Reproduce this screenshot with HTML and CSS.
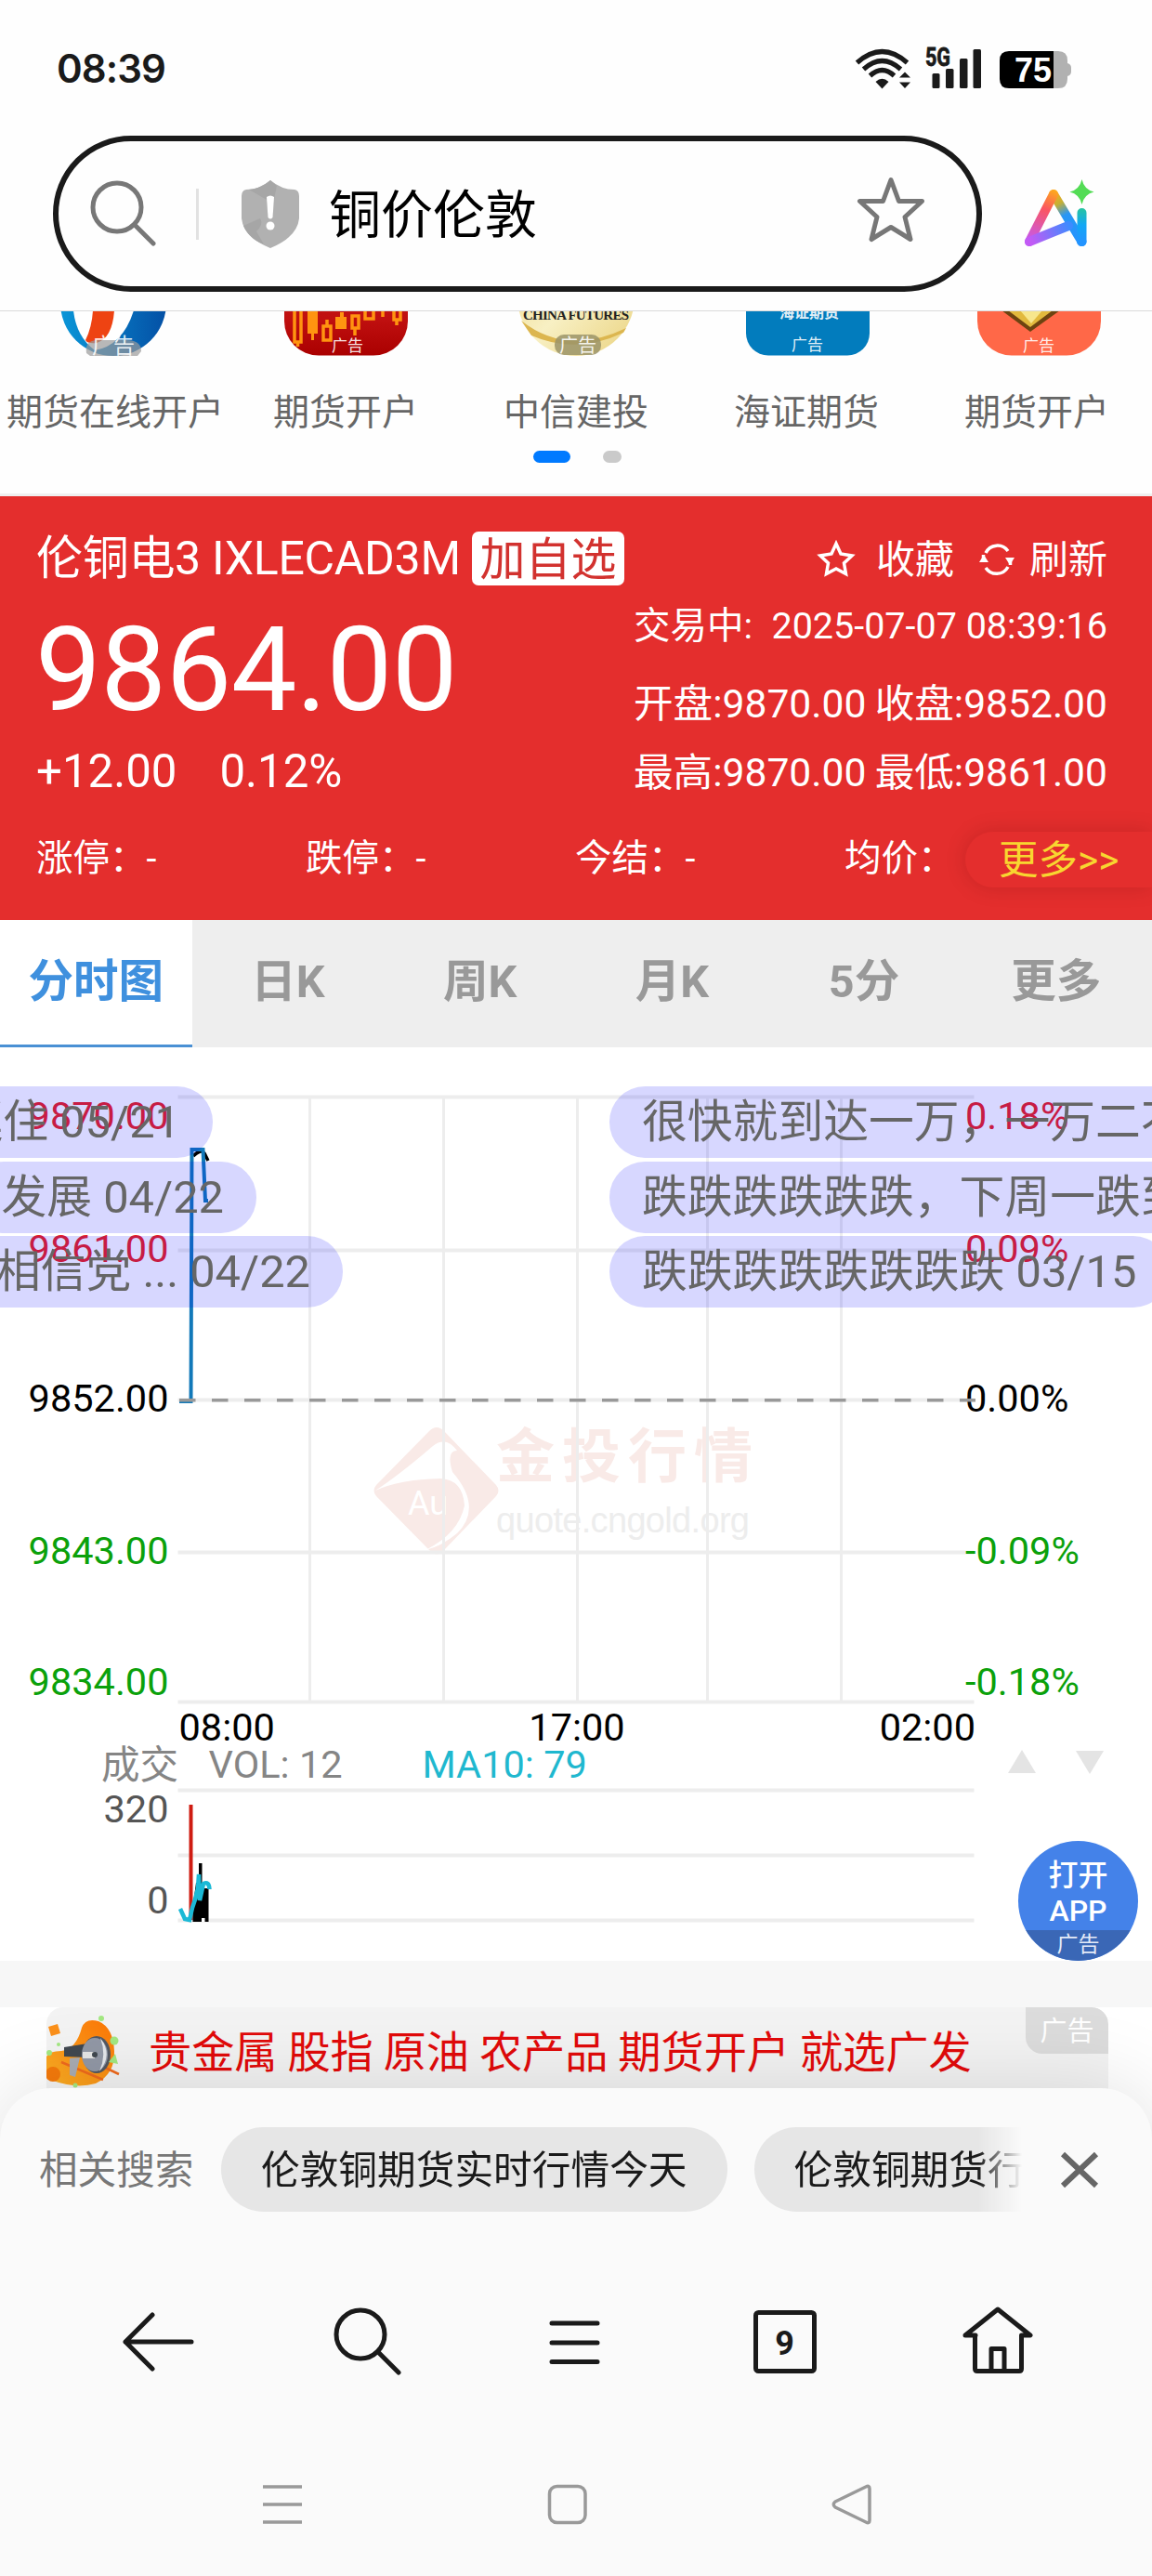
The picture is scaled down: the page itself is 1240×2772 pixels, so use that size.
FILE: index.html
```html
<!DOCTYPE html>
<html lang="zh-CN">
<head>
<meta charset="utf-8">
<title>铜价伦敦</title>
<link rel="stylesheet" href="styles.css">
</head>
<body>
<div class="phone">
  <header class="status-bar">
    <span class="clock">08:39</span>
    <svg class="status-icons" viewBox="916 46 242 56" aria-hidden="true">
      <g fill="none" stroke="#1a1a1a" stroke-width="5.2">
        <path d="M922.5 67.500Q949.500 43.500 976.500 67.500"/>
        <path d="M929.500 74.500Q949.500 56.500 969.500 74.500"/>
        <path d="M936.500 81.500Q949.500 69.500 962.500 81.500"/>
      </g>
      <path d="M942.500 88Q949.500 81.500 956.500 88L949.500 95.500Z" fill="#1a1a1a"/>
      <path d="M974 77.500L980 83.500H968ZM974 95L980 88.500H968Z" fill="#1a1a1a"/>
      <text x="996" y="70.500" class="net-label" textLength="27" lengthAdjust="spacingAndGlyphs">5G</text>
      <g fill="#1a1a1a">
        <rect x="1003.500" y="79" width="8" height="16" rx="1.500"/>
        <rect x="1018" y="74" width="8.500" height="21" rx="1.500"/>
        <rect x="1033" y="63" width="8.500" height="32" rx="1.500"/>
        <rect x="1047.500" y="53" width="8.500" height="42" rx="1.500"/>
      </g>
      <path d="M1134 55H1139Q1149 55 1149 65V68Q1153 69 1153 73V77Q1153 81 1149 82V85Q1149 95 1139 95H1134Z" fill="#b1b1b1"/>
      <path d="M1134 55H1086Q1076 55 1076 65V85Q1076 95 1086 95H1134Z" fill="#000"/>
      <text x="1092" y="88" class="battery-label" textLength="40" lengthAdjust="spacingAndGlyphs">75</text>
    </svg>
  </header>

  <div class="address-row">
    <div class="address">
      <svg class="i-search" viewBox="94 190 78 80"><circle cx="126" cy="223" r="26"/><path d="M145 242L165 262"/></svg>
      <span class="divider"></span>
      <svg class="i-shield" viewBox="258 190 66 78">
        <path d="M291 193Q303 203 317 203Q322 204 322 210V234Q320 254 291 266Q262 254 260 234V210Q260 204 265 203Q279 203 291 193Z" fill="#b1b1b1"/>
        <path d="M291 193Q281 202 268 203L294 218L298 199Z" fill="#a6a6a6"/>
        <path d="M262 242Q268 256 284 262L276 248Q284 240 280 234Z" fill="#a6a6a6"/>
        <path d="M287 211Q291 208 295 211L293.500 233Q291 236 288.500 233Z" fill="#fff"/><circle cx="291" cy="242" r="4.500" fill="#fff"/>
      </svg>
      <span class="query">铜价伦敦</span>
      <svg class="i-star" viewBox="921 188 76 76"><path d="M959 193.500L967.500 216.500H992.500L974 233.500L980 257.500L959 244.500L938 257.500L944 233.500L925.500 216.500H950.500Z"/></svg>
    </div>
    <svg class="i-ai" viewBox="1099 190 82 80">
      <defs>
        <linearGradient id="aiA" gradientUnits="userSpaceOnUse" x1="1134" y1="205" x2="1110" y2="262"><stop offset="0" stop-color="#fda81e"/><stop offset=".35" stop-color="#fb5560"/><stop offset="1" stop-color="#c25af5"/></linearGradient>
        <linearGradient id="aiB" gradientUnits="userSpaceOnUse" x1="1110" y1="260" x2="1150" y2="240"><stop offset="0" stop-color="#c25af5"/><stop offset="1" stop-color="#3d8bff"/></linearGradient>
        <linearGradient id="aiC" gradientUnits="userSpaceOnUse" x1="1134" y1="207" x2="1164" y2="260"><stop offset="0" stop-color="#fda81e"/><stop offset=".22" stop-color="#c5b034"/><stop offset=".45" stop-color="#2996f5"/><stop offset="1" stop-color="#2394ff"/></linearGradient>
        <linearGradient id="aiD" gradientUnits="userSpaceOnUse" x1="0" y1="224" x2="0" y2="260"><stop offset="0" stop-color="#27c4a0"/><stop offset=".5" stop-color="#12a7f5"/><stop offset="1" stop-color="#2394ff"/></linearGradient>
      </defs>
      <g fill="none" stroke-width="10" stroke-linecap="round" stroke-linejoin="round">
        <path d="M1134 209L1164.500 260" stroke="url(#aiC)"/>
        <path d="M1134 209L1108 260" stroke="url(#aiA)"/>
        <path d="M1108 260L1150 243" stroke="url(#aiB)"/>
        <path d="M1164.500 229V260.100L1164 260" stroke="url(#aiD)"/>
      </g>
      <path d="M1164.500 193Q1167 204 1177.500 206.500Q1167 209 1164.500 220Q1162 209 1151.500 206.500Q1162 204 1164.500 193Z" fill="#53dc55"/>
    </svg>
  </div>

  <section class="shortcuts">
    <div class="shortcut">
      <svg viewBox="0 335 248 50">
        <defs><linearGradient id="bl" x2="1"><stop offset="0" stop-color="#0a96d8"/><stop offset="1" stop-color="#0450a5"/></linearGradient></defs>
        <circle cx="122" cy="326" r="57" fill="url(#bl)"/>
        <path d="M79 334Q82 362 102 377Q132 372 144 334Z" fill="#fff"/>
        <path d="M100 334H123Q121 364 104 369Q94 370 92 366Q99 352 100 334Z" fill="#ee4312"/>
        <path d="M93 380Q91 366 105 366H136Q152 366 152 378L148 383H97Z" fill="#9a9a9a" fill-opacity=".7"/>
        <text x="122" y="380" class="ad-tag big">广告</text>
      </svg><span>期货在线开户</span>
    </div>
    <div class="shortcut">
      <svg viewBox="248 335 248 50">
        <defs><linearGradient id="rd" x2="0" y2="1"><stop offset="0" stop-color="#cf2220"/><stop offset=".7" stop-color="#c01010"/><stop offset="1" stop-color="#aa0000"/></linearGradient></defs>
        <rect x="306" y="250" width="133" height="132.500" rx="37" fill="url(#rd)"/>
        <g fill="none" stroke="#ff9410" stroke-width="3.500"><path d="M317 330V368H324V330M320.500 368V373M348 351H356V366H348ZM352 344V351M379 340H386V353H379ZM382 353V361M393 330V343H402V330M412 330V341M424 330V344H431V330M427 344V350"/></g>
        <path d="M331 330H342V359H338V366H335V359H331ZM361 341H366V336H370V341H373V354H361Z" fill="#ff9410"/>
        <text x="374" y="394" class="ad-tag" transform="translate(0,-16)">广告</text>
      </svg><span>期货开户</span>
    </div>
    <div class="shortcut">
      <svg viewBox="496 335 248 50">
        <defs><linearGradient id="gd" x2="1" y2="1"><stop offset="0" stop-color="#ecd57e"/><stop offset=".5" stop-color="#f8f0c4"/><stop offset="1" stop-color="#ead27e"/></linearGradient></defs>
        <circle cx="620" cy="320" r="63" fill="url(#gd)"/>
        <path d="M561 345Q610 384 674 353L671 358Q620 382 572 361Z" fill="#dcb64f"/>
        <text x="620" y="344" class="cf" textLength="114">CHINA FUTURES</text>
        <rect x="597" y="360" width="50" height="22" rx="10" fill="#9b9468" fill-opacity=".85"/>
        <text x="622" y="379" class="ad-tag mid">广告</text>
      </svg><span>中信建投</span>
    </div>
    <div class="shortcut">
      <svg viewBox="744 335 248 50">
        <rect x="803" y="250" width="133" height="132.500" rx="24" fill="#027cbd"/>
        <text x="871" y="342" class="ad-tag hz">海证期货</text>
        <text x="869" y="377" class="ad-tag">广告</text>
      </svg><span>海证期货</span>
    </div>
    <div class="shortcut">
      <svg viewBox="992 335 248 50">
        <rect x="1052" y="250" width="133" height="132.500" rx="37" fill="#ff6848"/>
        <path d="M1078 334L1109 357L1141 334Z" fill="#6d4310"/><path d="M1085 334L1109 352L1133 334Z" fill="#e2b93d"/><path d="M1098 334L1110 348L1122 334Z" fill="#f7e68d"/>
        <text x="1118" y="378" class="ad-tag">广告</text>
      </svg><span>期货开户</span>
    </div>
    <div class="pager"><i class="on"></i><i></i></div>
  </section>

  <section class="quote">
    <div class="quote-title">
      <h1>伦铜电3 IXLECAD3M</h1><button class="add">加自选</button>
      <div class="actions">
        <svg class="i-fav" viewBox="878 576 44 44"><path d="M900 582L905 593L917 595L908.500 603L910.500 614.500L900 609L889.500 614.500L891.500 603L883 595L895 593Z"/></svg><span>收藏</span>
        <svg class="i-refresh" viewBox="1051 576 44 44"><path d="M1061 592A14 14 0 0 1 1085 590M1085 607A14 14 0 0 1 1061 608M1058.500 600V594M1087.500 600V605"/><path d="M1054 602H1064L1059 594ZM1082 597H1092L1087 605Z" class="tip"/></svg><span>刷新</span>
      </div>
    </div>
    <div class="quote-main">
      <div class="price"><strong>9864.00</strong><div class="change"><span>+12.00</span><span>0.12%</span></div></div>
      <div class="detail">
        <div class="time"><span>交易中:</span><span>2025-07-07 08:39:16</span></div>
        <div class="pair"><span>开盘:9870.00</span><span>收盘:9852.00</span></div>
        <div class="pair second"><span>最高:9870.00</span><span>最低:9861.00</span></div>
      </div>
    </div>
    <div class="limits"><span>涨停：-</span><span>跌停：-</span><span>今结：-</span><span>均价：</span></div>
    <a class="more">更多&gt;&gt;</a>
  </section>

  <nav class="tabs"><a class="active">分时图</a><a>日K</a><a>周K</a><a>月K</a><a>5分</a><a>更多</a></nav>

  <section class="chart">
    <svg class="plot" viewBox="0 1127 1240 983">
      <g class="watermark">
        <path d="M470 1536Q474 1536 478 1540L534 1598Q539 1604 534 1610L478 1668Q470 1677 462 1668L405 1610Q400 1604 405 1598L462 1540Q466 1536 470 1536Z"/>
        <path class="gap" d="M404 1604Q430 1587 466 1556Q480 1545 492 1561Q480 1561 487 1584Q520 1622 492 1650Q475 1664 458 1668Q494 1650 500 1620Q498 1592 474 1591Q430 1592 404 1604Z"/>
        <text x="439" y="1630" class="au">Au</text>
        <text x="534" y="1589" class="cn" textLength="276">金投行情</text>
        <text x="534" y="1649" class="url" textLength="273">quote.cngold.org</text>
      </g>
      <path class="grid" d="M333.500 1180V1831M477.500 1180V1831M621.500 1180V1831M761.500 1180V1831M905.500 1180V1831"/>
      <path class="grid wide" d="M191.500 1180.500H1048.500M191.500 1345.500H1048.500M191.500 1506.500H1048.500M191.500 1670.500H1048.500M191.500 1831.500H1048.500M191.500 1926.500H1048.500M191.500 1996.500H1048.500M191.500 2066.500H1048.500"/>
      <g class="axis" text-anchor="end">
        <text x="181.500" y="1215" class="up">9870.00</text><text x="181.500" y="1357.500" class="up">9861.00</text><text x="181.500" y="1519">9852.00</text><text x="181.500" y="1682.500" class="down">9843.00</text><text x="181.500" y="1824" class="down">9834.00</text>
        <text x="181.500" y="1961" class="vol">320</text><text x="181.500" y="2059" class="vol">0</text>
      </g>
      <g class="axis">
        <text x="1039" y="1215" class="up">0.18%</text><text x="1039" y="1357.500" class="up">0.09%</text><text x="1039" y="1519">0.00%</text><text x="1039" y="1682.500" class="down">-0.09%</text><text x="1039" y="1824" class="down">-0.18%</text>
        <text x="192.500" y="1873">08:00</text><text x="621" y="1873" text-anchor="middle">17:00</text><text x="1050" y="1873" text-anchor="end">02:00</text>
        <text x="109" y="1914" class="name">成交</text><text x="224.500" y="1913" class="name">VOL: 12</text><text x="454.500" y="1913" class="ma">MA10: 79</text>
      </g>
      <path d="M208 1244Q216 1236 220 1241L224 1249" fill="none" stroke="#000" stroke-width="3.500"/>
      <path d="M193 1508H205.500L206.500 1237H218.500L221 1292H224" fill="none" stroke="#1279b9" stroke-width="4"/>
      <path d="M193 1506.800H1050" fill="none" stroke="#999" stroke-width="3.500" stroke-dasharray="17.500"/>
      <path d="M205.500 1942V2066" stroke="#cf1c12" stroke-width="4"/>
      <path d="M207.500 2068V2052L211 2026H214V2005H217.500V2032H224.500V2068Z"/>
      <rect x="217" y="2064" width="3.500" height="4" fill="#fff"/>
      <path d="M194 2054L199 2065L204 2066L207 2053L210 2044L213 2032L214 2017L215 2045L219 2027Q225 2024 225.500 2033" fill="none" stroke="#1bb9d6" stroke-width="4.500"/>
      <path d="M1085 1908L1100 1883L1115 1908ZM1158 1884H1188L1173 1909Z" fill="#e4e4e4"/>
    </svg>
    <div class="bullet r1 left">挺住 05/21</div>
    <div class="bullet r2 left">发展 04/22</div>
    <div class="bullet r3 left">相信党 ... 04/22</div>
    <div class="bullet r1 right">很快就到达一万，一万二不是梦</div>
    <div class="bullet r2 right">跌跌跌跌跌跌，下周一跌到底</div>
    <div class="bullet r3 right">跌跌跌跌跌跌跌跌 03/15</div>
    <a class="open-app"><span>打开</span><span>APP</span><small>广告</small></a>
  </section>

  <section class="banner-zone">
    <div class="banner">
      <svg class="i-horn" viewBox="50 2166 80 82">
        <defs><linearGradient id="or" x1="1" x2="0" y2="1"><stop offset="0" stop-color="#fb7506"/><stop offset="1" stop-color="#fbb024"/></linearGradient></defs>
        <path d="M88 2182Q92 2171 106 2175Q122 2182 123 2207Q124 2232 103 2242Q82 2248 57 2239L50 2232V2213Q53 2207 66 2207Q82 2205 88 2182Z" fill="url(#or)"/>
        <circle cx="57" cy="2232" r="8" fill="#f57a0b"/><path d="M52 2181L62 2178L65 2188L55 2191Z" fill="#fb901a"/>
        <path d="M66 2219L111 2238M109 2223L128 2232" stroke="#ef6a1d" stroke-width="2.500"/>
        <path d="M75 2215L86 2214L81 2235L75 2233Z" fill="#a9acb4"/><path d="M69 2203L94 2199V2214L69 2213Z" fill="#414850"/>
        <ellipse cx="104" cy="2211" rx="15" ry="20" fill="#535862"/><ellipse cx="102" cy="2211" rx="14" ry="18" fill="#9298a6"/><path d="M108 2193Q122 2211 107 2229Q115 2211 108 2193Z" fill="#e6e8ec"/><path d="M89 2208L102 2208V2215H89Z" fill="#e7e7e7"/><circle cx="102" cy="2211" r="3" fill="#414850"/>
        <g fill="#a3e882"><circle cx="109" cy="2172" r="3"/><circle cx="123" cy="2196" r="4.500"/><path d="M117 2219L124 2210L127 2221Z"/><circle cx="53" cy="2209" r="3"/><circle cx="63" cy="2200" r="2"/><circle cx="81" cy="2244" r="2.500"/></g>
      </svg>
      <span class="banner-text">贵金属 股指 原油 农产品 期货开户 就选广发</span>
      <span class="banner-tag">广告</span>
    </div>
  </section>

  <footer class="sheet">
    <div class="related">
      <span class="related-label">相关搜索</span>
      <div class="chips"><a>伦敦铜期货实时行情今天</a><a>伦敦铜期货行情走势</a></div>
      <svg class="i-close" viewBox="1138 2310 50 50"><path d="M1145 2318L1181 2352M1181 2318L1145 2352"/></svg>
    </div>
    <nav class="browser-nav">
      <svg viewBox="57 2470 226 100"><path d="M135 2520H206M164 2491L135 2520L164 2549"/></svg>
      <svg viewBox="283 2470 226 100"><circle cx="388" cy="2512" r="26"/><path d="M407 2531L429 2553"/></svg>
      <svg viewBox="509 2470 226 100"><path d="M594 2500H643M594 2521H643M594 2541.500H643"/></svg>
      <svg viewBox="735 2470 226 100"><rect x="813.500" y="2488.500" width="63" height="63" rx="3"/><text x="844.500" y="2533.500" text-anchor="middle">9</text></svg>
      <svg viewBox="961 2470 226 100"><path d="M1050 2513H1039L1074 2485L1109 2513H1099.500V2549Q1099.500 2551.500 1097 2551.500H1052Q1049.500 2551.500 1049.500 2549V2513M1067 2551V2527.500H1081V2551"/></svg>
    </nav>
    <nav class="system-nav">
      <svg viewBox="200 2665 207 60"><path d="M283 2676H325M283 2695H325M283 2714H325"/></svg>
      <svg viewBox="507 2665 207 60"><rect x="591.500" y="2675.500" width="38.500" height="39" rx="8"/></svg>
      <svg viewBox="814 2665 207 60"><path d="M899 2692L932 2676Q936 2674 936 2678V2712Q936 2716 932 2714L899 2698Q895.500 2695 899 2692Z"/></svg>
    </nav>
  </footer>
</div>
</body>
</html>
```
FILE: styles.css
```css
* { box-sizing: border-box; }
body { margin: 0; background: #fff; font-family: Roboto, "Noto Sans CJK SC", sans-serif; }
.phone { width: 1240px; height: 2772px; overflow: hidden; background: #fefefe; }
svg { display: block; flex: none; }

.status-bar { height: 146px; padding: 46px 82px 0 61px; display: flex; justify-content: space-between; align-items: flex-start; }
.clock { font: 600 42px/56px Inter, sans-serif; color: #1a1a1a; letter-spacing: -.9px; }
.status-icons { width: 242px; height: 56px; }
.net-label { font: 700 27px Roboto, sans-serif; fill: #1a1a1a; stroke: #1a1a1a; stroke-width: .8; }
.battery-label { font: 700 36px "Liberation Sans", sans-serif; fill: #fff; }

.address-row { height: 189px; padding: 0 59px 0 57px; display: flex; align-items: flex-start; justify-content: space-between; border-bottom: 1px solid #dadada; }
.address { width: 1000px; height: 168px; border: 6px solid #1a1a1a; border-radius: 84px; display: flex; align-items: center; padding: 0 54px 0 31px; }
.i-search { width: 78px; height: 80px; fill: none; stroke: #777; stroke-width: 5; stroke-linecap: round; }
.divider { width: 3px; height: 55px; background: #e2e2e2; margin: 0 44px 0 39px; }
.i-shield { width: 66px; height: 78px; }
.query { font-size: 56px; line-height: 80px; color: #000; margin: 4px auto 0 30px; }
.i-star { width: 76px; height: 76px; fill: none; stroke: #777; stroke-width: 5; stroke-linejoin: round; margin-top: -8px; }
.i-ai { width: 82px; height: 80px; margin-top: 44px; }

.shortcuts { height: 199px; display: grid; grid-template-columns: repeat(5, 248px); grid-template-rows: 150px 13px; border-bottom: 3px solid #efefef; }
.shortcut { display: flex; flex-direction: column; align-items: center; }
.shortcut svg { width: 248px; height: 50px; }
.shortcut span { margin-top: 30px; font-size: 39px; line-height: 58px; color: #666; white-space: nowrap; }
.ad-tag { font-size: 17px; fill: #fff; text-anchor: middle; fill-opacity: .9; }
.ad-tag.mid { font-size: 20px; }
.ad-tag.big { font-size: 23px; }
.ad-tag.hz { font-size: 16px; font-weight: 700; }
.cf { font: 700 15px "Liberation Serif", serif; fill: #222; text-anchor: middle; }
.pager { grid-column: 1 / -1; display: flex; justify-content: center; gap: 35px; padding-left: 3px; }
.pager i { width: 20px; height: 13px; border-radius: 7px; background: #cacaca; }
.pager .on { width: 40px; background: #007aff; }

.quote { height: 456px; background: #e42e2d; color: #fff; position: relative; padding: 36px 48px 0 39px; }
.quote-title { height: 62px; display: flex; align-items: center; }
.quote-title h1 { margin: 0; font-size: 50px; font-weight: 400; line-height: 62px; width: 469px; white-space: nowrap; letter-spacing: -.3px; }
.add { border: 0; border-radius: 7px; width: 164px; height: 58px; padding: 0 0 6px; background: #fff; color: #d2322f; font: 400 49px/50px "Noto Sans CJK SC", sans-serif; }
.actions { margin-left: auto; display: flex; align-items: center; font-size: 42px; line-height: 62px; padding-top: 4px; }
.i-fav, .i-refresh { width: 44px; height: 44px; fill: none; stroke: #fff; stroke-width: 3.500; margin-top: -5px; }
.i-fav { margin-right: 21px; }
.i-refresh { margin: -5px 13px 0 24px; }
.i-refresh .tip { fill: #fff; stroke: none; }
.quote-main { display: flex; justify-content: space-between; height: 248px; }
.price strong { display: block; font-weight: 400; font-size: 126px; line-height: 150px; margin-top: 14px; margin-left: -1px; letter-spacing: -.6px; }
.change { font-size: 49.200px; line-height: 60px; display: flex; gap: 46px; margin-top: 4px; }
.detail { width: 510px; }
.time { display: flex; justify-content: space-between; font-size: 39.500px; line-height: 58px; margin-top: 13px; white-space: nowrap; }
.pair { display: flex; justify-content: space-between; font-size: 42.600px; line-height: 62px; margin-top: 23px; white-space: nowrap; }
.pair.second { margin-top: 12px; }
.limits { display: grid; grid-template-columns: repeat(4, 290px); font-size: 39.500px; line-height: 58px; margin-top: 15px; }
.more { position: absolute; right: 0; top: 361px; width: 201px; height: 60px; border-radius: 30px 0 0 30px; padding-left: 36px; background: #e42e2d; box-shadow: 0 0 22px rgba(90, 0, 0, .2); color: #f8d630; font-size: 42.500px; line-height: 62px; }

.tabs { height: 137px; display: grid; grid-template-columns: repeat(6, 1fr); background: #eee; color: #999; font-weight: 700; font-size: 48.500px; line-height: 134px; text-align: center; }
.tabs .active { background: #fff; color: #3f90de; border-bottom: 4px solid #4a90d4; }

.chart { height: 983px; position: relative; overflow: hidden; background: #fff; }
.plot { width: 1240px; height: 983px; }
.grid { fill: none; stroke: #ededed; stroke-width: 3; }
.grid.wide { stroke-width: 4; }
.axis { font-size: 41.500px; fill: #000; }
.axis .up { fill: #ec2222; }
.axis .down { fill: #0ba10b; }
.axis .vol { fill: #555; }
.axis .name { fill: #858585; }
.axis .ma { fill: #1fb8cf; }
.watermark { fill: #f9eae7; }
.watermark .gap, .watermark .au { fill: #fff; }
.watermark .au { font-size: 36px; }
.watermark .cn { font: 700 63px "Noto Sans CJK SC", sans-serif; }
.watermark .url { font: 38px "Liberation Sans", sans-serif; fill: #ededed; }
.bullet { position: absolute; height: 77px; border-radius: 38px; padding: 0 35px; background: rgba(0, 0, 255, .157); color: #666; font-size: 48.800px; line-height: 78px; white-space: nowrap; }
.r1 { top: 42px; }
.r2 { top: 123px; }
.r3 { top: 203px; }
.right { left: 656px; }
.r1.left { right: 1011px; }
.r2.left { right: 964px; }
.r3.left { right: 871px; }
.open-app { position: absolute; left: 1096px; top: 854px; width: 129px; height: 129px; border-radius: 50%; overflow: hidden; background: #4482e9; color: #fff; font-size: 32px; line-height: 38px; font-weight: 500; text-align: center; display: flex; flex-direction: column; padding-top: 18px; }
.open-app small { font-size: 23px; line-height: 32px; font-weight: 400; background: #3a67b6; color: #e4ebf8; margin-top: 2px; flex: 1; }

.banner-zone { height: 187px; border-top: 50px solid #f7f7f7; padding: 0 47px 0 50px; background: #fff; }
.banner { height: 137px; border-radius: 18px 18px 0 0; background: #f3f3f3; display: flex; align-items: flex-start; overflow: hidden; }
.i-horn { width: 80px; height: 82px; margin-top: 6px; }
.banner-text { margin-left: 30px; font-size: 46.200px; word-spacing: -.6px; line-height: 68px; padding-top: 15px; color: #e20a0a; white-space: nowrap; }
.banner-tag { margin-left: auto; width: 89px; height: 50px; border-radius: 0 18px 0 18px; background: #dcdcdc; color: #fff; font-size: 29px; line-height: 52px; text-align: center; }

.sheet { position: relative; margin-top: -50px; height: 525px; border-radius: 55px 55px 0 0; background: #fafafa; box-shadow: 0 0 90px rgba(0, 0, 0, .13); }
.related { height: 175px; padding: 42px 53px 0 42px; display: flex; align-items: flex-start; }
.related-label { width: 196px; font-size: 41.600px; line-height: 93px; color: #777; white-space: nowrap; }
.chips { width: 862px; display: flex; gap: 29px; overflow: hidden; -webkit-mask-image: linear-gradient(90deg, #000 815px, transparent); mask-image: linear-gradient(90deg, #000 815px, transparent); }
.chips a { flex: none; height: 91px; border-radius: 46px; padding: 0 43px; background: #e6e6e6; color: #1a1a1a; font-size: 41.700px; line-height: 93px; white-space: nowrap; }
.i-close { width: 50px; height: 50px; margin: 21px 0 0 37px; fill: none; stroke: #666; stroke-width: 6; }
.browser-nav { height: 195px; padding: 48px 57px 0; display: flex; }
.browser-nav svg { width: 226px; height: 100px; fill: none; stroke: #1a1a1a; stroke-width: 5; stroke-linecap: round; stroke-linejoin: round; }
.browser-nav text { font: 700 36px Roboto, sans-serif; fill: #1a1a1a; stroke: none; }
.system-nav { padding: 48px 0 0 200px; display: flex; gap: 100px; }
.system-nav svg { width: 207px; height: 60px; fill: none; stroke: #999; stroke-width: 3.500; stroke-linejoin: round; }
```
